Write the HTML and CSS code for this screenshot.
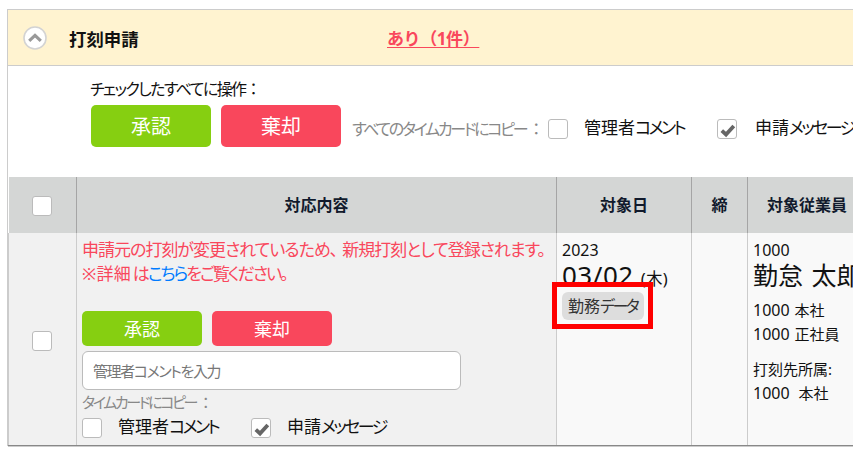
FILE: index.html
```html
<!DOCTYPE html>
<html lang="ja">
<head>
  <meta charset="UTF-8">
  <title>打刻申請</title>
  <link rel="stylesheet" href="styles.css">
</head>
<body>
  <div class="panel">
    <div class="panel-head">
      <svg class="toggle" width="24" height="24" viewBox="0 0 24 24">
        <circle cx="12" cy="12" r="11" fill="#fff" stroke="#d3d3d3" stroke-width="1.6"/>
        <path d="M6.2 14.8 L12 9.4 L17.8 14.8" fill="none" stroke="#999" stroke-width="3.2"/>
      </svg>
      <h2>打刻申請</h2>
      <a class="count" href="#">あり（1件）</a>
    </div>

    <div class="bulk">
      <p class="bulk-title">チェックしたすべてに操作<span class="colon">：</span></p>
      <div class="bulk-row">
        <button class="btn ok">承認</button>
        <button class="btn ng">棄却</button>
        <span class="copy">すべてのタイムカードにコピー<span class="colon">：</span></span>
        <span class="check"></span>
        <span class="label">管理者<span class="kana">コメント</span></span>
        <span class="check"><svg width="18" height="18" viewBox="0 0 18 18"><path d="M3.8 10.7 L8 14.5 L15.8 6" fill="none" stroke="#666" stroke-width="3.8"/></svg></span>
        <span class="label">申請<span class="kana">メッセージ</span></span>
      </div>
    </div>

    <div class="grid">
      <div class="th"><span class="check"></span></div>
      <div class="th">対応内容</div>
      <div class="th">対象日</div>
      <div class="th">締</div>
      <div class="th">対象従業員</div>

      <div class="td select"><span class="check"></span></div>
      <div class="td action">
        <p class="alert"><span class="line1">申請元の打刻が変更されているため<span class="comma">、</span>新規打刻として登録されます。</span><br><span class="line2"><span class="kanji">※詳細</span>は<a href="#">こちら</a>をご覧ください。</span></p>
        <div class="row-buttons">
          <button class="btn ok small">承認</button>
          <button class="btn ng small">棄却</button>
        </div>
        <input class="comment" type="text" placeholder="管理者コメントを入力">
        <p class="copy-small">タイムカードにコピー<span class="colon">：</span></p>
        <div class="row-checks">
          <span class="check"></span>
          <span class="label">管理者<span class="kana">コメント</span></span>
          <span class="check"><svg width="18" height="18" viewBox="0 0 18 18"><path d="M3.8 10.7 L8 14.5 L15.8 6" fill="none" stroke="#666" stroke-width="3.8"/></svg></span>
          <span class="label">申請<span class="kana">メッセージ</span></span>
        </div>
      </div>
      <div class="td date">
        <div class="year">2023</div>
        <div class="day">03/02<small>(木)</small></div>
        <span class="tag">勤務<span class="kana">データ</span></span>
        <div class="highlight"></div>
      </div>
      <div class="td"></div>
      <div class="td staff">
        <div class="code">1000</div>
        <div class="name">勤怠 <span class="given">太郎</span></div>
        <div class="belong"><span class="num">1000</span> 本社</div>
        <div class="belong"><span class="num">1000</span> 正社員</div>
        <div class="belong place">打刻先所属:</div>
        <div class="belong"><span class="num">1000</span>&nbsp; 本社</div>
      </div>
    </div>
  </div>
</body>
</html>
```
FILE: styles.css
```css
* { box-sizing: border-box; }
body { margin: 0; padding: 9px 0 0 7px; width: 853px; height: 453px; overflow: hidden; background: #fff; color: #111; font-family: "Noto Sans", "Noto Sans CJK JP", sans-serif; font-size: 16px; font-feature-settings: "palt"; white-space: nowrap; }
p, h2 { margin: 0; }
button, input { font-family: inherit; font-feature-settings: inherit; }

.panel { width: 846px; border: 1px solid #ccc; border-right: 0; border-bottom: 0; }
.panel-head { display: flex; align-items: center; height: 56px; padding-left: 15px; background: #fff3d0; border-bottom: 1px solid #ccc; }
.toggle { margin-top: 1px; }
.panel-head h2 { width: 318px; margin: 2px 0 0 22px; font-size: 17.4px; line-height: 24px; }
.count { margin-top: 3px; color: #f9475c; font-size: 17px; font-weight: bold; line-height: 24px; text-decoration-thickness: 1px; text-underline-offset: 2px; font-feature-settings: normal; letter-spacing: -0.4px; }

.bulk { height: 111px; padding: 11px 0 0 82px; }
.bulk-title { height: 28px; line-height: 24px; letter-spacing: -1.6px; }
.bulk-title .colon { margin-left: 4px; }
.bulk-row { display: flex; align-items: center; height: 42px; padding-left: 1px; }
.btn { flex: none; width: 120px; height: 42px; margin: 0 10px 0 0; padding: 0 0 2px; border: 0; border-radius: 5px; color: #fff; font-size: 20px; }
.btn.small { height: 35px; font-size: 18px; }
.ok { background: #86cf11; }
.ng { background: #f9475c; }
.copy { flex: none; width: 196px; margin: 3px 0 0 1px; color: #888; letter-spacing: -2.3px; }
.colon { margin-left: 6px; }
.check { flex: none; display: inline-block; width: 20px; height: 20px; background: #fff; border: 1px solid #bbb; border-radius: 3px; }
.check svg { display: block; }
.bulk-row .check { margin-top: 6px; }
.label { flex: none; width: 139px; padding-left: 16px; font-size: 17px; line-height: 24px; }
.bulk-row .label { width: 149px; margin-top: 4px; padding-left: 16px; }
.bulk-row .label:last-child { width: 116px; padding-left: 18px; }
.kana { letter-spacing: -2.5px; }

.grid { display: grid; grid-template-columns: 69px 480px 135px 56px 105px; grid-template-rows: 56px 212px; border-bottom: 1px solid #888; box-shadow: 0 1px #ccc; }
.th { display: flex; align-items: center; justify-content: center; padding-bottom: 2px; background: #d4d6d5; border-right: 1px solid #a5a5a5; color: #111a2c; font-weight: bold; }
.th:first-child { margin-left: 1px; }
.th:nth-child(5) { justify-content: flex-start; padding-left: 19px; border-right: 0; }
.th .check { margin: 4px 2px 0 0; }
.td { position: relative; min-width: 0; background: #f9f9f9; border-right: 1px solid #ccc; line-height: 24px; }
.select { display: flex; align-items: center; padding: 4px 0 0 23px; border-left: 1px solid #ccc; background: #f1f1f1; }
.action { padding: 5px 0 0 5px; background: #f1f1f1; }
.alert { height: 73px; color: #f9475c; font-size: 17px; }
.alert a { color: #007bff; text-decoration: none; }
.line1 { letter-spacing: -1px; }
.line2 { letter-spacing: -2px; }
.kanji { margin-right: 2px; letter-spacing: 0.2px; }
.comma { margin-right: 5px; }
.row-buttons { display: flex; }
.comment { display: block; width: 379px; height: 39px; margin-top: 5px; padding: 0 10px; border: 1px solid #bbb; border-radius: 6px; font-size: 15px; letter-spacing: -1.4px; }
.comment::placeholder { color: #777; }
.copy-small { height: 28px; color: #888; font-size: 15px; letter-spacing: -2.4px; }
.row-checks { display: flex; align-items: center; height: 20px; }
.row-checks .label { width: 149px; margin-top: -2px; }

.date { padding: 5px 0 0 5px; }
.year, .code { height: 25px; }
.day { height: 25px; font-size: 26px; line-height: 24px; letter-spacing: 0.5px; }
.day small { margin-left: 7px; font-size: 16.5px; letter-spacing: 0.3px; }
.tag { display: block; width: 82px; height: 28px; margin-top: 4px; padding-left: 6px; background: #ddd; border-radius: 6px; color: #333; font-size: 16px; line-height: 28px; }
.highlight { position: absolute; left: -5px; top: 49px; width: 101px; height: 47px; border: 5px solid #f00; }
.staff { padding: 5px 0 0 5px; border-right: 0; }
.name { height: 35px; font-size: 25px; line-height: 24px; }
.given { margin-left: 2px; }
.belong { font-size: 15px; line-height: 24px; }
.place { margin-top: 11px; }
.num { margin-right: 1px; font-size: 16px; }
```
